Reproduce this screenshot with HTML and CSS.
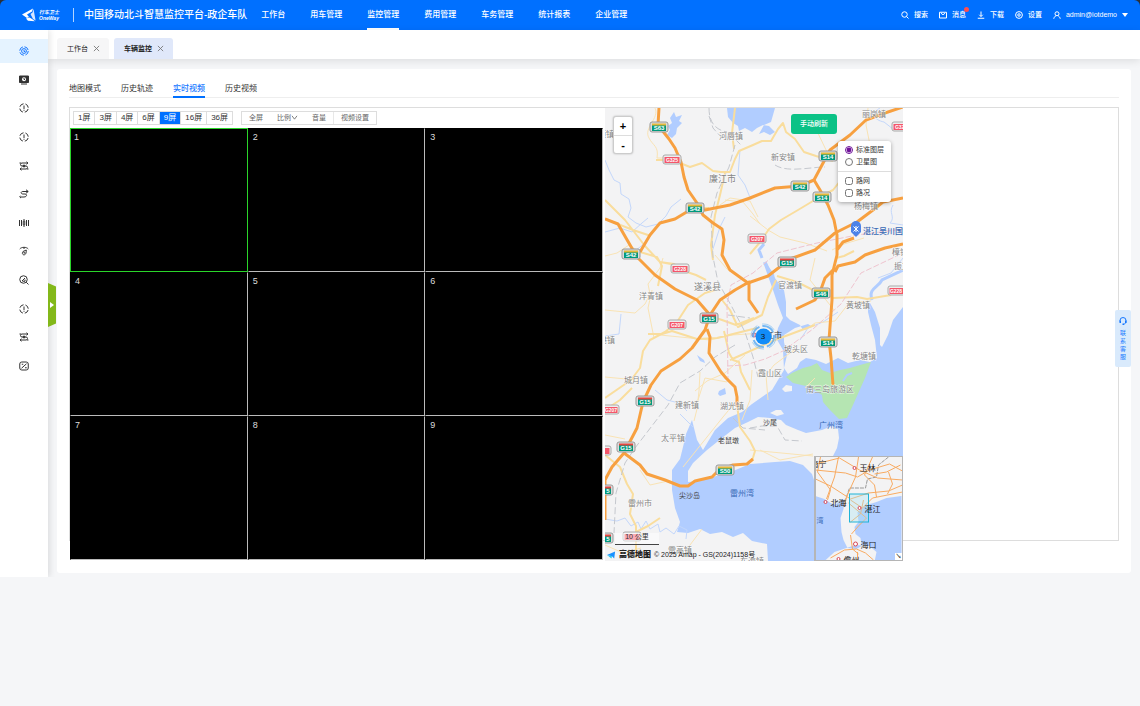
FILE: index.html
```html
<!DOCTYPE html>
<html lang="zh-CN">
<head>
<meta charset="utf-8">
<meta name="viewport" content="width=device-width, initial-scale=1">
<title>车辆监控</title>
<link rel="stylesheet" href="styles.css">
</head>
<body>
<div class="frame">
<header class="topbar">
  <a class="brand" href="#">
    <svg class="brand-mark" viewBox="0 0 14 14" aria-hidden="true"><path d="M0 6.500 11 .5 10 3.500 5 6.500 7 9 5 10z" fill="#fff"/><path d="M11.500 1 13.600 12.500 11 11 8.500 6 10.500 4.500z" fill="#d6e7ff"/><path d="M4 10.500 7.500 9.500 10 11 13 13.300 6 12.800z" fill="#fff"/></svg>
    <span class="brand-text"><span class="brand-cn">行车卫士</span><span class="brand-en">OneWay</span></span>
  </a>
  <h1 class="title">中国移动北斗智慧监控平台-政企车队</h1>
  <nav class="nav">
    <a href="#">工作台</a><a href="#">用车管理</a><a href="#" class="on">监控管理</a><a href="#">费用管理</a><a href="#">车务管理</a><a href="#">统计报表</a><a href="#">企业管理</a>
  </nav>
  <div class="tools">
    <a href="#"><svg class="ti" viewBox="0 0 16 16"><circle cx="7" cy="7" r="5.500"/><path d="m11 11 4 4"/></svg>搜索</a>
    <a href="#" class="has-dot"><svg class="ti" viewBox="0 0 16 16"><path d="M1 2.500h14v11.500H1zM4 4.500l4 3 4-3"/></svg>消息<i class="dot"></i></a>
    <a href="#"><svg class="ti" viewBox="0 0 16 16"><path d="M8 1v10M4.500 7.500 8 11l3.500-3.500M1.500 14.500h13"/></svg>下载</a>
    <a href="#"><svg class="ti" viewBox="0 0 16 16"><circle cx="8" cy="8" r="6.800"/><circle cx="8" cy="8" r="2.500"/></svg>设置</a>
    <a href="#" class="user"><svg class="ti" viewBox="0 0 16 16"><circle cx="8" cy="5.500" r="4"/><path d="M1.500 15.500c.5-3 2.500-5 4.500-6M14.500 15.500c-.5-3-2.500-5-4.500-6"/></svg>admin@iotdemo<i class="caret"></i></a>
  </div>
</header>
</div>

<svg width="0" height="0" class="defs" aria-hidden="true">
  <defs>
    <symbol id="i-alert" viewBox="0 0 20 20"><circle cx="10" cy="10" r="8.500" stroke-dasharray="9.350 4" stroke-dashoffset="-2"/><path d="M10 5v7M10 13.500v2"/></symbol>
    <symbol id="i-route" viewBox="0 0 20 20"><path d="M17 4H6a3 3 0 0 0 0 6h8a3 3 0 0 1 0 6H3M15 1.500 18 4l-3 2.500M5 13.500 2 16l3 2.500M1 4h3M16 16h3"/><circle cx="10" cy="10" r="2" fill="currentColor"/></symbol>
  </defs>
</svg>

<div class="layout">
  <aside class="side">
    <nav class="side-nav">
      <a href="#" class="on" aria-label="实时监控"><svg viewBox="0 0 20 20"><circle cx="10" cy="10" r="8.500" stroke-dasharray="10 3.350"/><circle cx="10" cy="10" r="4.800"/><path d="M10 7.500V11h2.500"/></svg></a>
      <a href="#" aria-label="视频"><svg viewBox="0 0 20 20"><path d="M1 2h18v13H1z" fill="currentColor"/><path d="M4 18h12"/><circle cx="10" cy="8.500" r="4" fill="#fff" stroke="none"/><path d="M10 6v3h2"/></svg></a>
      <a href="#" aria-label="报警"><svg><use href="#i-alert"/></svg></a>
      <a href="#" aria-label="提醒"><svg><use href="#i-alert"/></svg></a>
      <a href="#" aria-label="线路"><svg><use href="#i-route"/></svg></a>
      <a href="#" aria-label="轨迹"><svg viewBox="0 0 20 20"><path d="M18 5H8C3 5 3 10 8 10h4c5 0 4 6-2 6H4M14 1.500 18.500 5 14 8.500M3 13.500 1.500 16 4 18"/></svg></a>
      <a href="#" aria-label="统计"><svg viewBox="0 0 20 20"><path d="M1 4v12M19 4v12M5 4v12M15 4v12M8.500 6.500h3v7h-3zM10 2v4M10 14v4"/></svg></a>
      <a href="#" aria-label="仪表"><svg viewBox="0 0 20 20"><path d="M1.500 6C5 1.500 15 1.500 18.500 6M10 3v3"/><path d="M14.500 8 8 11c-3 4 0 7.500 3 6.500s3.500-4 3.500-9.500z"/><circle cx="10.500" cy="13.500" r="1"/></svg></a>
      <a href="#" aria-label="查询"><svg viewBox="0 0 20 20"><circle cx="9" cy="9" r="7.500"/><path d="m14.500 14.500 4.500 4.500M6 12l6-6M7 12.500h5V9"/></svg></a>
      <a href="#" aria-label="异常"><svg><use href="#i-alert"/></svg></a>
      <a href="#" aria-label="路线管理"><svg><use href="#i-route"/></svg></a>
      <a href="#" aria-label="设置"><svg viewBox="0 0 20 20"><rect x="1.500" y="2" width="17" height="16" rx="4"/><path d="m5 14.500 10-9M5.500 6.500h3M12 13.500h3.500"/></svg></a>
    </nav>
    <button class="expand" type="button" aria-label="展开"><i></i></button>
  </aside>

  <main class="main">
    <div class="tabs">
      <a href="#" class="tab">工作台<svg viewBox="0 0 8 8"><path d="m1 1 6 6M7 1 1 7"/></svg></a>
      <a href="#" class="tab on">车辆监控<svg viewBox="0 0 8 8"><path d="m1 1 6 6M7 1 1 7"/></svg></a>
    </div>

    <section class="card">
      <nav class="modes"><a href="#">地图模式</a><a href="#">历史轨迹</a><a href="#" class="on">实时视频</a><a href="#">历史视频</a></nav>

      <div class="work">
        <div class="video">
          <div class="bar">
            <div class="seg"><button type="button">1屏</button><button type="button">3屏</button><button type="button">4屏</button><button type="button">6屏</button><button type="button" class="on">9屏</button><button type="button">16屏</button><button type="button">36屏</button></div>
            <div class="opts"><button type="button">全屏</button><button type="button">比例<svg viewBox="0 0 8 6"><path d="m1 1 3 4 3-4"/></svg></button><button type="button">音量</button><button type="button">视频设置</button></div>
          </div>
          <div class="screens">
            <div class="on">1</div><div>2</div><div>3</div><div>4</div><div>5</div><div>6</div><div>7</div><div>8</div><div>9</div>
          </div>
        </div>

        <div class="map">
          <svg class="map-art" viewBox="605 108 298 453" preserveAspectRatio="xMidYMid slice">
            <defs>
              <g id="s-g"><rect x="-9" y="-5" width="18" height="10" rx="2" fill="#dcdcdc" stroke="#999"/><rect x="-7" y="-3" width="14" height="7" fill="#00997c"/><path d="M-7-3.500H7v2H-7z" fill="#e6b93a"/></g>
              <g id="s-r"><rect x="-9" y="-5" width="18" height="10" rx="2" fill="#dcdcdc" stroke="#999"/><rect x="-7" y="-3" width="14" height="7" fill="#00997c"/><path d="M-7-3.500H7v2H-7z" fill="#e54540"/></g>
              <g id="s-p"><rect x="-9" y="-5" width="18" height="9" rx="2" fill="#eee" stroke="#aaa"/><rect x="-7.500" y="-3" width="15" height="6" fill="#f4566a"/></g>
            </defs>
            <rect x="605" y="108" width="298" height="453" fill="#f3f3f4"/>
            <g class="water">
              <path d="M903 307 893 320 888 335 882 347 880 345 880 328 875 312 870 303 868 302 868 312 871 325 875 340 877 358 870 362 860 360 848 363 838 358 826 364 816 360 806 358 800 362 797 368 788 374 784 368 787 355 784 342 784 335 795 328 808 324 811 326 803 330 800 325 790 320 786 316 786 302 784 290 776 284 774 274 768 266 763 262 768 276 773 290 778 305 783 318 778 328 776 338 783 350 784 370 778 380 772 390 762 397 752 404 742 412 728 418 715 430 703 450 697 440 692 420 686 434 683 447 680 459 672 470 672 490 675 508 680 522 677 532 688 533 700 529 710 534 722 532 733 537 743 533 752 541 767 544 768 561 903 561z"/>
              <path d="M727 108l1 9 5 6 5 3 1 5 6-3 7 4 5-4 6-3 6 1 6 6-5 3-6-3-5 2 5-9 7-3 4-14zM674 112l2 5 6-2-3 6 3 2-5 5-1 6-4 4-5-3 3-5-2-4 4-3-2-5zM697 355l7 5 1 3-5-2zM719 391l6-3 1 6-6 2-2-2z"/>
              <path d="M762 258l-3-8 5-6M765 262l6 13 10 14M872 300c-4-12 6-12 10-20l21-10" fill="none" stroke="#b1cdff" stroke-width="3"/>
            </g>
            <g fill="#f3f3f4">
              <path d="M770 418 758 417 748 422 735 428 722 438 707 450 693 463 688 471 688 482 700 481 713 477 733 471 750 464 775 462 790 461 803 465 812 474 815 483 833 483 833 456 837 448 839 438 838 429 832 426 822 430 806 433 798 430 786 425 781 420z"/>
              <path d="M770 413l6-3 5 0 3 4-7 2zM782 389l4-4 6 1v5l-7 1z"/>
            </g>
            <path d="M786 377 792 373 803 368 811 366 817 363 822 370 830 373 840 370 850 368 860 365 871 362 865 378 853 405 847 418 839 419 829 409 823 402 822 395 810 387 793 383z" fill="#b5e5b2"/>
            <path d="M843 381l4-6 5-2" fill="none" stroke="#b1cdff" stroke-width="2"/>
            <g class="river">
              <path d="M605 160l4 10 5 10 6 3 1 11 8 5 2 9-3 9 8 6 10 4 12-3 8-8 5-9 10-8M605 232l15-4 12 4 10-9 6-5M645 243l-10 8M712 252l8-25 5-10M740 150l-2 25 7 10 6 15M605 336l14-2 2-20M605 519l12 2 8-3 6 8 7-4 3 7 5-8 4 8 8-5 2 8 6-4 8 6 5-8 8 4-1 9M655 390l12 10 12 3 8 8M880 108c-10 5-6 12 4 14l9 7 10-3M893 205c-5 8 3 12-3 18l13 2M680 414l8 8 5 5M800 340l8-12 15-6 15-10M903 258l-12 15-13 5"/>
            </g>
            <g class="minor">
              <path d="M655 108c5 10-12 20-6 30 4 8 10 8 8 20h10M605 310l30 3 10-9 5-10-2-10 12-16 3-10M652 290l-4 18 6 30M605 377l32 3M605 256l12-3 12-8 8 5M720 205l10-7 20 3 8 16M725 200l18 2 10 12 7 10M605 435l20 4M640 470l10 15 18-4M660 335l50 5 22-5 30-2M698 400l7-22 22 4M700 372l-1 19-2 18-3 12M750 216l18 14 12 7 25 6 22 8M815 258l-5 22 24 30M832 250l12-6 20-6M805 330l10-7 20-2 14-18 22-2M750 450l63 6M760 450l20 10 33-6M752 370l-2 30-8 20M745 355l-20 18-18 8-12 10M768 400l-2-25 8-10 20-15M733 405l-10 12-40 50M815 378l-10 10M815 127l12 25M868 108l-2 17 4 20M690 545l12-16M715 255l12 14 12 8M870 185l12 16M605 545l18 8 18-5"/>
            </g>
            <g class="major">
              <path d="M605 200l20 20 20 26 15 16 22 4M605 219l28 11 18 6M656 160h22M680 163l10 4 12-4 11 8 8 1h9l5-13 4-8 14-6 9-4 9 0 7-12 5-6 3 9 9 7 9 13 12 4 17 5M735 108l-3 25 2 16M725 173l-5 22-5 20-4 30 2 15M715 290l-10 3-17 12-11 17-12 10-15 8-7 11-3 17-9 12-26 18M605 410l15-10 12-12M648 334l14 0 10-3 25 8 20-1 40-10M750 390l-9-18-2-10-6-2-4-7-5-22M750 254l11-13 8-12 12-9 17-10 20-12 15-8 12-15 18-18 22-12M640 252l17 5 5 9-4 20M660 262l14 2 10 7 12 4 10 5M697 208h12M722 300l8 10 8 17 24-12 6-18 8-17M710 316l12 4 14 5 18-7M777 276l20 6 14 7 22 9 24-1 10 2 24-4M737 405l3 22 10 14 5 10-3 10M605 455l15 12 7 17 6 10-3 20 6 12v32M628 536l20-10 12-8M836 258l8-2 10-5M730 360l45-20 40-15"/>
            </g>
            <path class="rail" d="M709 108c0 15 7 22 18 24M709 116l4 12 8 9h12l8 8M735 145l-6 22-12 26-6 24 2 40 5 25 14 25 13 25 8 25 5 20M735 345l-20 12-15 14-20 12-12 22-33 43-10 15-9 30-2 40M733 418l10 10 22 2M750 428l12-2h15l8 14 17 1M728 315l22 3M775 165c12 8 36 2 50 2"/>
            <path class="rail2" d="M728 382l-1-77 4-20 22-12 24-20 40-10 40-8 46-6M727 366l18-1 20-6 18-8 30-22 28-25 20-31 42-20"/>
            <g class="expressway">
              <path d="M659 108 658 125 669 139 675 148 681 162 684 177 688 190 697 203 703 215 713 223 722 229 724 240 722 255 730 270 748 283 768 276 790 259 815 250 835 233 857 222 873 210 883 202 903 198"/>
              <path d="M605 219 618 224 626 238 637 257 655 275 675 289 697 300 710 315 705 330 692 348 680 359 661 371 651 385 643 402 637 428 624 453 612 467 605 480V520"/>
              <path d="M640 252 650 235 660 223 675 219 690 210 705 210 730 205 750 198 775 188 800 186 814 180 822 165 830 150 850 135 866 120 882 114 903 107"/>
              <path d="M814 180 820 190 828 205 834 220 837 235 837 255 832 275 832 300 829 340 831 358 833 385M710 315l10-15 15-10 14-8 0 18 9 13M707 329l3 8-1 16 12 19 5 6 9 9 2 10v10M833 270l-8 8-5 14-5 8-19 9M835 272l3-6 17-4 10-7 20-7 18-4M837 250l6-8 11-4"/>
              <path d="M624 453 640 465 647 474 665 480 680 486 688 486 695 481 712 477 718 471 733 465 747 464 753 459"/>
            </g>
            <g class="shields">
              <use href="#s-g" x="659" y="127"/><text x="659" y="130">S63</text>
              <use href="#s-p" x="672" y="160"/><text x="672" y="162" class="nat">G325</text>
              <use href="#s-g" x="695" y="208"/><text x="695" y="211">S42</text>
              <use href="#s-g" x="631" y="254"/><text x="631" y="257">S42</text>
              <use href="#s-g" x="828" y="156"/><text x="828" y="159">S14</text>
              <use href="#s-g" x="800" y="186"/><text x="800" y="189">S42</text>
              <use href="#s-g" x="822" y="197"/><text x="822" y="200">S14</text>
              <use href="#s-p" x="757" y="239"/><text x="757" y="241" class="nat">G207</text>
              <use href="#s-r" x="787" y="262"/><text x="787" y="265">G15</text>
              <use href="#s-p" x="680" y="269"/><text x="680" y="271" class="nat">G228</text>
              <use href="#s-r" x="709" y="318"/><text x="709" y="321">G15</text>
              <use href="#s-p" x="677" y="325"/><text x="677" y="327" class="nat">G207</text>
              <use href="#s-g" x="821" y="293"/><text x="821" y="296">S46</text>
              <use href="#s-g" x="828" y="342"/><text x="828" y="345">S14</text>
              <use href="#s-p" x="897" y="291"/><text x="896" y="293" class="nat">G228</text>
              <use href="#s-p" x="901" y="127"/><text x="901" y="129" class="nat">G325</text>
              <use href="#s-r" x="645" y="401"/><text x="645" y="404">G15</text>
              <use href="#s-p" x="610" y="410"/><text x="611" y="412" class="nat">G207</text>
              <use href="#s-r" x="626" y="447"/><text x="626" y="450">G15</text>
              <use href="#s-p" x="602" y="451"/>
              <use href="#s-p" x="632" y="537"/>
              <use href="#s-g" x="725" y="470"/><text x="725" y="473">S50</text>
              <use href="#s-r" x="604" y="490"/><text x="608" y="493">5</text>
              <use href="#s-r" x="604" y="538"/><text x="608" y="541">5</text>
            </g>
            <g class="places">
              <text x="719" y="139">河唇镇</text><text x="771" y="160">新安镇</text><text x="862" y="117">丽岗镇</text><text x="854" y="209">杨梅镇</text><text x="598" y="137">颂镇</text>
              <text x="709" y="182" class="city">廉江市</text><text x="694" y="290" class="city">遂溪县</text><text x="639" y="299">洋青镇</text><text x="599" y="343">港镇</text><text x="624" y="383">城月镇</text>
              <text x="675" y="408">建新镇</text><text x="720" y="409">湖光镇</text><text x="661" y="441">太平镇</text><text x="628" y="506">雷州市</text><text x="668" y="553">雷高镇</text><text x="740" y="564">东海镇</text>
              <text x="778" y="288">官渡镇</text><text x="846" y="308">黄坡镇</text><text x="892" y="255">樟铺</text><text x="894" y="269">振文</text><text x="784" y="352">坡头区</text><text x="852" y="359">乾塘镇</text><text x="758" y="376">霞山区</text><text x="806" y="392">南三岛旅游区</text>
            </g>
            <g class="spots"><text x="718" y="443">老鼠墩</text><text x="679" y="498">尖沙岛</text><text x="763" y="425">沙尾</text></g>
            <g class="bays"><text x="819" y="428">广州湾</text><text x="730" y="496">雷州湾</text></g>
            <path d="M851 226a5 5 0 0 1 10 0v6l-5 5-5-5z" fill="#4c82e8"/><path d="m853.500 226.500 5 5M858.500 226.500l-5 5M856 226v6" stroke="#fff" stroke-width="1"/>
            <text x="863" y="234" class="airport">湛江吴川国际机场</text>
            <text x="758" y="338" class="hub">湛江市</text>
            <circle cx="754" cy="335" r="2" fill="#fff" stroke="#cc5572"/><circle cx="754" cy="335" r=".7" fill="#c45"/>
            <circle cx="763.500" cy="336.500" r="12.500" fill="none" stroke="#80bdf2" stroke-dasharray="14 5" opacity=".7"/>
            <circle cx="763.500" cy="336.500" r="10.500" fill="none" stroke="#55a9f4" stroke-width="2" stroke-dasharray="13 3" opacity=".8"/>
            <circle cx="763.500" cy="336.500" r="8" fill="#128cf8"/><text x="763" y="339" class="cluster">3</text>
          </svg>

          <div class="zoomer"><button type="button" aria-label="放大">+</button><button type="button" aria-label="缩小">-</button></div>
          <button class="refresh" type="button">手动刷新</button>
          <div class="layers">
            <label><input type="radio" name="base" checked>标准图层</label>
            <label><input type="radio" name="base">卫星图</label>
            <hr>
            <label><input type="checkbox">路网</label>
            <label><input type="checkbox">路况</label>
          </div>
          <div class="scale">10 公里</div>
          <div class="credit"><svg viewBox="0 0 10 8"><path d="M0 4 9 0 8 8 5.500 5.500z" fill="#1890ff"/><path d="M0 4 5.500 5.500 5 8z" fill="#20c5ed"/></svg><b>高德地图</b><span>© 2025 Amap - GS(2024)1158号</span></div>

          <div class="overview">
            <svg viewBox="815 457 87 103" preserveAspectRatio="xMidYMid slice">
              <rect x="815" y="457" width="87" height="103" fill="#f3f3f4"/>
              <path d="M815 496l9 3 6 4 5 2 6-6 3 1-1 9-3 9 1 14 2 8 4 8 9 1 5-3-1-8-5-4-1-7 4-5-1-10 9-7 10-3 10-4 15-2v66h-27l2-10-7-6-14-1-12 4-9 3-11 10h-9z" fill="#b1cdff"/>
              <path d="M888 457l-10 8-2 12-9 2-2 9-16 0-4 12-9 2" fill="none" stroke="#999" stroke-dasharray="4 1"/>
              <g fill="none" stroke="#f8ab62"><path d="M815 470l30 3 12 4 12-7 20-6 13 7M815 479l15 7 20 13 18-6 20-2 14-6M820 457l-3 15 13 18-3 10M838 457l-4 20-8 22M858 457l-3 20-9 20-2 8M815 464l24-6 20 12 18 8 25 2M872 457l-8 18 10 10 2 12M900 465l-14 7-12 2M850 500l12 8 10-10 30-6M848 503l18 15-8 8-7 8M863 500l-3 14-10 8M850 535l2 14 6 5M830 558l14-8 12-1 9 4 8 7M857 552v8M888 472l4 12-5 10"/></g>
              <rect x="849" y="494" width="19" height="28" fill="#a6e3f2" fill-opacity=".35" stroke="#20b3d6"/>
              <g fill="#fff" stroke="#d64858"><circle cx="854" cy="468" r="1.500"/><circle cx="825" cy="502" r="1.500"/><circle cx="859" cy="508" r="1.500"/><circle cx="855" cy="544" r="2"/><circle cx="838" cy="559" r="1.500"/></g>
              <g class="ov-names"><text x="810" y="467">南宁</text><text x="859" y="471">玉林</text><text x="830" y="506">北海</text><text x="864" y="512">湛江</text><text x="860" y="548">海口</text><text x="843" y="563">儋州</text><text x="816" y="523" class="sea">湾</text></g>
            </svg>
            <button type="button" aria-label="收起">↘</button>
          </div>
        </div>
      </div>
    </section>
  </main>
</div>
<button class="contact" type="button"><svg viewBox="0 0 16 16"><path d="M2 9V7a6 6 0 0 1 12 0v2c0 3-2 5-5 5.500" fill="none" stroke="currentColor" stroke-width="2"/><path d="M1 7h3v5H1zM12 7h3v5h-3zM7 13h3v3H7z" fill="currentColor"/></svg><span>联系客服</span></button>
</body>
</html>
```
FILE: styles.css
```css
* { box-sizing: border-box; }
body {
  margin: 0;
  min-height: 100vh;
  position: relative;
  background: #f5f6f8;
  color: #222;
  font: 8px/12px "Liberation Sans", "Noto Sans CJK SC", sans-serif;
}
a { color: inherit; text-decoration: none; }
button { font: inherit; color: inherit; border: 0; padding: 0; margin: 0; background: none; cursor: pointer; }
.defs { position: absolute; }

.frame { background: #2a3038; }
.topbar {
  height: 30px;
  display: flex;
  align-items: center;
  padding: 0 12px 0 22px;
  border-radius: 6px 6px 0 0;
  background: #0070ff;
  color: #fff;
  white-space: nowrap;
}
.brand { display: flex; align-items: center; gap: 3px; padding-right: 12px; border-right: 1px solid #b3d4ff; }
.brand-mark { width: 14px; height: 14px; }
.brand-text { display: flex; flex-direction: column; font-style: italic; font-weight: bold; width: 22px; }
.brand-cn { font-size: 5px; line-height: 7px; }
.brand-en { font-size: 5px; line-height: 5px; }
.title { margin: 0 14px 0 10px; font-size: 10px; line-height: 14px; font-weight: 500; }
.nav { display: flex; gap: 25px; align-self: stretch; font-weight: 500; }
.nav a { line-height: 30px; }
.nav .on { box-shadow: inset 0 -2px #fff; }
.tools { display: flex; gap: 11px; margin-left: auto; font-size: 7px; font-weight: 500; }
.tools a { display: flex; align-items: center; gap: 5px; position: relative; }
.tools .user { font-weight: normal; }
.ti { width: 8px; height: 8px; fill: none; stroke: #fff; stroke-width: 2; }
.dot { position: absolute; right: -3px; top: -2px; width: 5px; height: 5px; border-radius: 50%; background: #ff4d4f; }
.caret { border: 3px solid transparent; border-top: 4px solid #fff; border-bottom: 0; }

.layout { display: flex; }
.side { position: relative; z-index: 2; flex: 0 0 48px; background: #fff; box-shadow: 2px 0 6px #0000001a; clip-path: inset(0 -10px 0 0); }
.side-nav { display: flex; flex-direction: column; justify-content: space-between; height: 339px; margin-top: 9px; }
.side-nav a { height: 24px; display: flex; align-items: center; justify-content: center; color: #333; }
.side-nav .on { background: #e5f3ff; color: #1677ff; }
.side-nav svg { width: 10px; height: 10px; fill: none; stroke: currentColor; stroke-width: 2; }
.expand { position: absolute; left: 48px; top: 253px; width: 8px; height: 44px; background: #83b81a; clip-path: polygon(0 0, 100% 8%, 100% 92%, 0 100%); }
.expand i { display: block; margin-left: 2px; width: 4px; border: 3px solid transparent; border-left: 4px solid #fff; border-right: 0; }

.main { flex: 1; min-width: 0; padding-bottom: 4px; }
.tabs { display: flex; gap: 5px; height: 29px; padding: 8px 0 0 9px; background: #fff; box-shadow: 0 2px 8px #0000001a; }
.tab { display: flex; align-items: center; gap: 5px; padding: 0 9px 0 10px; background: #f6f6f7; border-radius: 3px 3px 0 0; font-size: 7px; }
.tab.on { background: #e0e8fa; font-weight: bold; }
.tab svg { width: 7px; height: 7px; fill: none; stroke: #777; }
.card { margin: 10px 9px 0; padding: 10px 12px 32px; background: #fff; border-radius: 3px; }
.modes { display: flex; gap: 20px; margin-bottom: 9px; border-bottom: 1px solid #eee; color: #333; }
.modes a { padding: 4px 0 3px; margin-bottom: -1px; }
.modes .on { color: #1677ff; border-bottom: 2px solid #0070ff; padding-bottom: 1px; font-weight: 500; }

.work { display: grid; grid-template-columns: 533fr 298fr 213fr; column-gap: 2px; height: 434px; border: 1px solid #ddd; }
.bar { display: flex; gap: 8px; height: 20px; padding: 3px 0 3px 3px; white-space: nowrap; }
.seg, .opts { display: flex; border: 1px solid #ddd; color: #333; }
.seg button { padding: 0 4px; border-right: 1px solid #ddd; line-height: 12px; }
.seg button:last-child { border-right: 0; }
.seg .on { background: #0070ff; color: #fff; }
.opts { font-size: 7px; color: #666; line-height: 12px; }
.opts button { padding: 0 7px; }
.opts button:last-child { border-left: 1px solid #e8e8e8; }
.opts svg { width: 7px; height: 5px; fill: none; stroke: #666; }
.screens { display: grid; grid-template-columns: repeat(3, 1fr); grid-auto-rows: 144px; background: #000; color: #ddd; }
.screens div { padding: 2px 4px; border: 1px solid #000; border-color: #000 #bbb #bbb #000; font-size: 9px; }
.screens .on { border: 1px solid #2ad52a; padding: 2px 3px; }

.map { position: relative; height: 453px; overflow: hidden; }
.map-art { display: block; width: 100%; height: 100%; }
.map-art text { font-size: 8px; }
.water { fill: #b1cdff; }
.river, .minor, .major, .expressway { fill: none; stroke-linejoin: round; }
.river { stroke: #c3d7fb; stroke-width: 1; }
.minor { stroke: #f9e3b4; stroke-width: 1; }
.major { stroke: #f9dd9d; stroke-width: 2; }
.expressway { stroke: #f7a040; stroke-width: 3; }
.rail { fill: none; stroke: #c5c8ce; stroke-width: 1; stroke-dasharray: 7 3; }
.rail2 { fill: none; stroke: #efc4cf; stroke-width: 1; stroke-dasharray: 6 2; }
.map-art .shields text { font-size: 6px; font-weight: bold; fill: #fff; text-anchor: middle; }
.map-art .shields .nat { font-size: 5px; }
.places { fill: #858585; paint-order: stroke; stroke: #ffffffb3; stroke-width: 1px; }
.map-art .places .city { font-size: 9px; }
.spots, .hub { fill: #444; }
.map-art .spots text { font-size: 7px; }
.bays, .airport { fill: #3768b5; }
.airport { font-weight: 500; }
.map-art .cluster { text-anchor: middle; fill: #111; }

.zoomer { position: absolute; left: 8px; top: 8px; width: 20px; display: flex; flex-direction: column; background: #fff; border: 1px solid #ccc; border-radius: 3px; box-shadow: 0 0 2px #0004; }
.zoomer button { height: 18px; font-size: 11px; font-weight: bold; color: #000; }
.zoomer button + button { border-top: 1px solid #ddd; }
.refresh { position: absolute; right: 66px; top: 6px; width: 46px; height: 20px; border-radius: 3px; background: #0bc286; color: #fff; font-size: 7px; font-weight: 500; }
.layers { position: absolute; right: 12px; top: 33px; width: 53px; padding: 3px 0; background: #fff; border-radius: 3px; box-shadow: 0 1px 4px #0005; }
.layers label { display: flex; align-items: center; height: 12px; padding-left: 7px; gap: 3px; font-size: 7px; color: #333; white-space: nowrap; }
.layers input { margin: 0; width: 8px; height: 8px; accent-color: #6f1399; }
.layers hr { margin: 3px 0; border: 0; border-top: 1px solid #ddd; }
.scale { position: absolute; left: 10px; bottom: 16px; width: 44px; height: 12px; border-bottom: 1px solid #444; background: #ffffff80; color: #333; font-size: 7px; line-height: 8px; text-align: center; }
.credit { position: absolute; left: 2px; bottom: 0; display: flex; align-items: center; gap: 3px; color: #222; font-size: 7px; white-space: nowrap; }
.credit svg { width: 9px; height: 8px; }
.credit b { font-size: 8px; font-weight: 900; }
.overview { position: absolute; right: 0; bottom: 0; width: 89px; height: 105px; border: 1px solid #b5b5b5; border-left-width: 2px; }
.overview svg { display: block; width: 100%; height: 100%; }
.ov-names { font-size: 8px; fill: #222; }
.ov-names .sea { fill: #3768b5; font-size: 7px; }
.overview button { position: absolute; right: 0; bottom: 0; width: 7px; height: 7px; background: #fff; font-size: 6px; line-height: 7px; }

.contact { position: absolute; right: 9px; top: 310px; width: 16px; display: flex; flex-direction: column; align-items: center; gap: 4px; padding: 7px 4px 6px; background: #d9eafc; border-radius: 2px; color: #1677ff; font-size: 6px; line-height: 8px; z-index: 3; }
.contact svg { width: 8px; height: 8px; }
.contact span { width: 6px; word-break: break-all; }
```
